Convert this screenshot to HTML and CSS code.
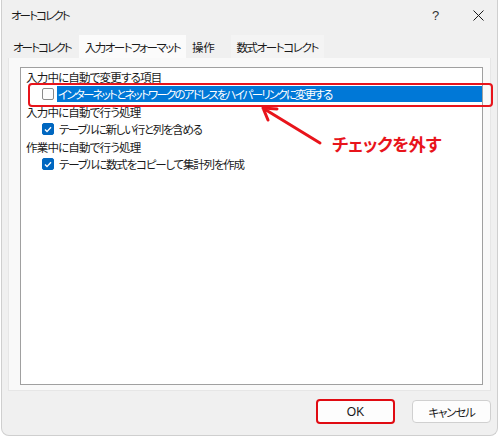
FILE: index.html
```html
<!DOCTYPE html>
<html lang="ja">
<head>
<meta charset="utf-8">
<title>オートコレクト</title>
<link rel="stylesheet" href="styles.css">
</head>
<body>
<div class="window">
  <div class="titlebar">
    <span class="title">オートコレクト</span>
    <span class="help">?</span>
    <span class="close"><svg width="11" height="11" viewBox="0 0 11 11"><path d="M0.5 0.5L10.5 10.5M10.5 0.5L0.5 10.5" stroke="#1a1a1a" stroke-width="1"/></svg></span>
  </div>
  <div class="tabs">
    <div class="tab t1">オートコレクト</div>
    <div class="tab active">入力オートフォーマット</div>
    <div class="tab t3">操作</div>
    <div class="tab t4">数式オートコレクト</div>
  </div>
  <div class="panel">
    <div class="list">
      <div class="row group">入力中に自動で変更する項目</div>
      <div class="row item selected"><span class="cb"></span><span class="label l1">インターネットとネットワークのアドレスをハイパーリンクに変更する</span></div>
      <div class="row group">入力中に自動で行う処理</div>
      <div class="row item"><span class="cb checked"><svg width="8" height="7" viewBox="0 0 8 7"><path d="M1 3.6L3 5.6L7 1.2" fill="none" stroke="#fff" stroke-width="1.4"/></svg></span><span class="label l2">テーブルに新しい行と列を含める</span></div>
      <div class="row group">作業中に自動で行う処理</div>
      <div class="row item"><span class="cb checked"><svg width="8" height="7" viewBox="0 0 8 7"><path d="M1 3.6L3 5.6L7 1.2" fill="none" stroke="#fff" stroke-width="1.4"/></svg></span><span class="label l3">テーブルに数式をコピーして集計列を作成</span></div>
    </div>
  </div>
  <div class="footer">
    <button class="btn ok">OK</button>
    <button class="btn cancel">キャンセル</button>
  </div>

  <div class="mark"></div>
  <svg class="arrow" width="80" height="50" viewBox="0 0 80 50">
    <path d="M62 37L8 4" stroke="#e8141b" stroke-width="3" stroke-linecap="round"/>
    <path d="M5 2L19 3M5 2L10 14" stroke="#e8141b" stroke-width="3" stroke-linecap="round" stroke-linejoin="round" fill="none"/>
  </svg>
  <div class="note">チェックを外す</div>
</div>
</body>
</html>
```

FILE: styles.css
```css
* { box-sizing: border-box; }
html, body { margin: 0; padding: 0; background: #ffffff; }
body {
  font-family: "Noto Sans CJK JP", "Noto Sans", sans-serif;
  font-size: 11.5px;
  color: #1a1a1a;
  font-feature-settings: "palt";
}
.window {
  position: relative;
  width: 497px;
  height: 436px;
  margin-left: 1px;
  background: #f0f0f0;
  border: 1px solid #cfcfcf;
  border-top: none;
  border-radius: 0 0 8px 8px;
}
.titlebar {
  height: 30px;
  display: flex;
  align-items: center;
  padding-left: 9px;
}
.title { flex: 1; letter-spacing: -1.9px; }
.help { width: 41px; font-size: 13px; color: #333; font-family: "Liberation Sans", sans-serif; }
.close { width: 11px; display: flex; align-items: center; margin-right: 13px; }
.tabs {
  display: flex;
  margin-top: 5px;
  padding-left: 5px;
  height: 23px;
  align-items: stretch;
}
.tab {
  display: flex;
  align-items: center;
  padding: 0 6px;
  white-space: nowrap;
}
.tab.t1 { letter-spacing: -1.9px; padding-right: 8px; }
.tab.active { background: #fbfbfb; letter-spacing: -1.5px; padding-right: 6px; }
.tab.t3 { letter-spacing: -0.3px; }
.tab.t4 { margin-left: 10px; background: #f4f4f4; letter-spacing: -1.4px; }
.panel {
  margin: 0 6px 0 6px;
  height: 333px;
  background: #f9f9f9;
  border: 1px solid #e6e6e6;
  border-top: none;
  padding: 9px 7px 5px 11px;
}
.list {
  height: 318px;
  background: #ffffff;
  border: 1px solid #a0a0a0;
  padding-left: 5px;
}
.row {
  height: 17.5px;
  display: flex;
  align-items: center;
  white-space: nowrap;
}
.group { letter-spacing: -0.8px; }
.item { padding-left: 16px; }
.cb {
  width: 12px;
  height: 12px;
  border: 1px solid #8a8a8a;
  border-radius: 2px;
  background: #fdfdfd;
  display: flex;
  align-items: center;
  justify-content: center;
  flex: none;
}
.cb.checked { background: #0067c0; border-color: #0067c0; }
.label { margin-left: 4px; padding: 0 1px; }
.l1 { letter-spacing: -1.8px; }
.l2 { letter-spacing: -1.3px; }
.l3 { letter-spacing: -1.2px; }
.selected .label {
  flex: 1;
  background: #0078d7;
  color: #ffffff;
  height: 16px;
  line-height: 16px;
  margin-left: 3px;
}
.footer {
  display: flex;
  justify-content: flex-end;
  gap: 17px;
  padding: 9px 6px 0 0;
}
.btn {
  width: 79px;
  height: 23px;
  font-family: inherit;
  font-size: 11.5px;
  font-feature-settings: "palt";
  color: #1a1a1a;
  background: #fdfdfd;
  border: 1px solid #d0d0d0;
  border-radius: 4px;
  padding: 0;
}
.btn.ok { border: 2px solid #e00b12; height: 25px; margin-top: -1px; font-family: "Liberation Sans", sans-serif; font-size: 12px; }
.btn.cancel { letter-spacing: -1.2px; }
.mark {
  position: absolute;
  left: 26px;
  top: 83px;
  width: 465px;
  height: 24px;
  border: 2px solid #e8141b;
  border-radius: 4px;
}
.arrow {
  position: absolute;
  left: 256px;
  top: 106px;
}
.note {
  position: absolute;
  left: 330px;
  top: 131px;
  font-size: 17.5px;
  font-weight: bold;
  color: #e8141b;
  letter-spacing: -0.5px;
}
```
